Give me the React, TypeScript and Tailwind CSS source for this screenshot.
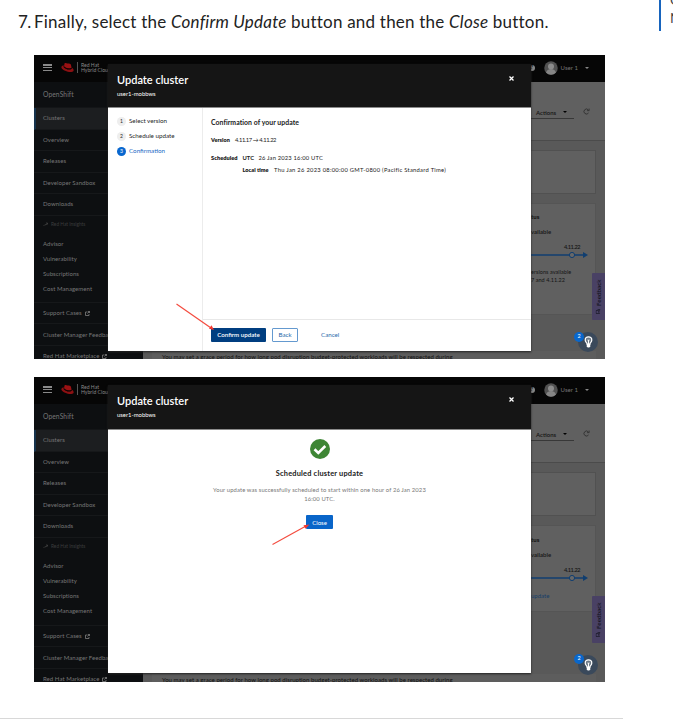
import React from "react";

const sans = "font-['Lato','Open_Sans',sans-serif]";

function Line({ className = "", children }: { className?: string; children: React.ReactNode }) {
  return <div className={`whitespace-nowrap ${className}`}>{children}</div>;
}

function Fedora() {
  return (
    <svg className="h-[11px] w-[13px] shrink-0" viewBox="0 0 26 20">
      <path d="M7 2C9 0 11 2 13 2s4-1 6 1c1 2 2 5 2 8-4 2-11 1-15-3z" fill="#9b1113" />
      <path d="M6 6C2 6 0 8 1 11c3 6 20 11 24 6 1-3-1-5-3-6l-1 2c-5 3-13 0-16-4z" fill="#8c1012" />
      <path d="M5.600 8c3 4 10 6 15 4" fill="none" stroke="#1a0000" strokeWidth="1.500" />
    </svg>
  );
}

function ExternalIcon() {
  return (
    <svg className="ml-[3px] inline-block size-[5px] align-[-0.500px]" viewBox="0 0 10 10" fill="none" stroke="#858585" strokeWidth="1.500">
      <path d="M5 2H1v7h7V6M5 5l4-4M6 1h3v3" />
    </svg>
  );
}

function NavItem({ label, active = false, external = false }: { label: string; active?: boolean; external?: boolean }) {
  return (
    <div
      className={`flex h-[21.550px] shrink-0 items-center whitespace-nowrap border-b border-[#16181a] pb-[1px] text-[6px] tracking-[0.060px] ${
        active ? "border-l-2 border-l-[#16334d] bg-[#1c1e20] pl-[7px]" : "pl-[9px]"
      }`}
    >
      <span>{label}{external && <ExternalIcon />}</span>
    </div>
  );
}

function Sidebar({ second }: { second: boolean }) {
  return (
    <div className="flex w-[109px] shrink-0 flex-col overflow-hidden bg-[#0d0f11] text-[#777]">
      <div className="flex h-[26px] shrink-0 items-center border-b border-[#131517] pl-[9px] text-[6.700px] tracking-[0.100px]">OpenShift</div>
      <NavItem label="Clusters" active />
      <NavItem label="Overview" />
      <NavItem label="Releases" />
      <NavItem label="Developer Sandbox" />
      <NavItem label="Downloads" />
      <div className="flex h-[18px] shrink-0 items-center gap-[3px] pl-[9px] text-[4.800px] text-[#3c3d3e]">
        <svg className="size-[5px]" viewBox="0 0 10 10" fill="none" stroke="#444" strokeWidth="1.500"><path d="M1 8l3-3 2 1 3-4M6 2h3v3" /></svg>
        Red Hat Insights
      </div>
      <div className={`flex shrink-0 flex-col border-b border-[#16181a] pt-[2px] text-[6px] leading-[15.100px] tracking-[0.060px] ${second ? "h-[70px]" : "h-[69px]"}`}>
        <div className="pl-[9px]">Advisor</div>
        <div className="pl-[9px]">Vulnerability</div>
        <div className="pl-[9px]">Subscriptions</div>
        <div className="pl-[9px]">Cost Management</div>
      </div>
      <NavItem label="Support Cases" external />
      <NavItem label="Cluster Manager Feedback" />
      <NavItem label="Red Hat Marketplace" external />
    </div>
  );
}

function Masthead() {
  return (
    <div className="flex h-[27px] shrink-0 items-center bg-[#060606] pb-[2px] pl-[9px] pr-[16px] text-[#777]">
      <div className="flex h-[7px] w-[9px] flex-col justify-between">
        <div className="h-[1.500px] bg-[#8a8a8a]" />
        <div className="h-[1.500px] bg-[#8a8a8a]" />
        <div className="h-[1.500px] bg-[#8a8a8a]" />
      </div>
      <div className="ml-[9px] flex"><Fedora /></div>
      <div className="ml-[3px] h-[11px] w-px bg-[#555]" />
      <div className="ml-[3px] whitespace-nowrap text-[5.100px] leading-[5px] text-[#888]">
        Red Hat<br />Hybrid Cloud Console
      </div>
      <div className="ml-auto flex items-center">
        <div className="flex size-[6px] items-center justify-center rounded-full bg-[#858585] text-[5px] font-bold leading-none text-black">?</div>
        <svg className="ml-[9px] size-[14px]" viewBox="0 0 28 28">
          <circle cx="14" cy="14" r="13.500" fill="#515151" />
          <circle cx="14" cy="11" r="6" fill="#8b8b8b" />
          <path d="M4 23c2-6 6-7 10-7s8 1 10 7c-6 6-14 6-20 0z" fill="#858585" />
        </svg>
        <span className="ml-[3px] whitespace-nowrap text-[6px] tracking-[0.050px]">User 1</span>
        <div className="ml-[7px] border-x-2 border-t-[2.500px] border-x-transparent border-t-[#888]" />
      </div>
    </div>
  );
}

function Dashboard({ second }: { second: boolean }) {
  return (
    <div className="relative flex min-w-0 grow flex-col bg-[#595959] text-[#151515]">
      <div className="flex h-[59px] shrink-0 items-start justify-end border-b border-[#4b4b4b] bg-[#606060] pr-[15px] pt-[23px]">
        <div className="flex h-[14px] w-[43px] items-center justify-between border-b border-[#383838] pl-[5px] pr-[7px] pt-[1px] text-[6px] font-semibold">
          Actions<span className="border-x-2 border-t-[2.500px] border-x-transparent border-t-black" />
        </div>
        <svg className="ml-[9px] mt-[3px] size-[7px]" viewBox="0 0 12 12" fill="none" stroke="#303030" strokeWidth="1.500">
          <path d="M9.500 8.500A4.300 4.300 0 1 1 9 3M10.500 1v3.500H7" />
        </svg>
      </div>
      <div className="mr-[9px] mt-[9px] h-[44px] shrink-0 border border-[#515151] bg-[#606060]" />
      <div className={`mr-[9px] mt-[9px] flex shrink-0 flex-col border border-[#555] bg-[#606060] pl-[387px] ${second ? "h-[87px]" : "h-[112px]"}`}>
        <Line className={`text-[6px] font-black leading-[8px] ${second ? "mt-[10px]" : "mt-[9px]"}`}>tus</Line>
        <Line className="mt-[7px] text-[6px] font-semibold leading-[8px]">vailable</Line>
        <Line className="ml-[33px] mt-[7px] text-[5.600px] font-semibold leading-[8px] tracking-[-0.400px]">4.11.22</Line>
        <svg className="h-[8px] w-[58px] shrink-0" viewBox="0 0 58 8">
          <path d="M0 4h52" stroke="#103e70" strokeWidth="1.600" />
          <path d="M52 1l5 3-5 3z" fill="#103e70" />
          <circle cx="41" cy="4" r="2.600" fill="#686868" stroke="#103e70" />
        </svg>
        {second ? (
          <Line className="mt-[10px] text-[6px] leading-[8px] text-[#163e68]">update</Line>
        ) : (
          <Line className="mt-[9px] text-[5.500px] leading-[8px] tracking-[0.050px]">ersions available<br />7 and 4.11.22</Line>
        )}
      </div>
      <div className="mt-auto flex h-[8px] items-start overflow-hidden pl-[9px]">
        <Line className="h-[8px] w-[444px] bg-[#5d5d5d] pl-[10px] pt-[2px] text-[6px] leading-[8px] tracking-[0.050px] text-[#101010]">
          You may set a grace period for how long pod disruption budget-protected workloads will be respected during
        </Line>
      </div>
      <div className={`absolute right-0 flex h-[47px] w-[13px] items-center justify-center rounded-l-[1px] bg-[#494164] ${second ? "top-[192px]" : "top-[191px]"}`}>
        <div className="flex -rotate-90 items-center gap-[3px] whitespace-nowrap text-[6.300px] font-semibold text-[#141420]">
          <svg className="size-[5px] shrink-0" viewBox="0 0 10 10" fill="none" stroke="#141420" strokeWidth="1.300"><path d="M1 1h6v5H4L1 8zM5 8h2l2 1V4" /></svg>
          Feedback
        </div>
      </div>
      <div className={`absolute right-[7px] flex size-[20px] items-center justify-center rounded-full bg-[#3a495b] ${second ? "top-[251px]" : "top-[250px]"}`}>
        <svg className="h-[12px] w-[9px]" viewBox="0 0 18 24">
          <path d="M9 1.500c-4 0-7 2.500-6.500 7 0 4 4 5 4 8h5c0-3 4-4 4-8 .5-4.500-2.500-7-6.500-7z" fill="#6d7986" stroke="#fff" strokeWidth="2.500" />
          <path d="M9 10.500l-3-3h6zM8 10h2v6H8z" fill="#fff" />
          <path d="M5.500 16h7v5l-2 2h-3l-2-2z" fill="#fff" />
        </svg>
      </div>
      <div className="absolute right-[21px] top-[250px] flex size-[10px] items-center justify-center rounded-full bg-[#0967cc] text-[5.500px] leading-none text-white">2</div>
    </div>
  );
}

function Step({ n, label, active = false }: { n: number; label: string; active?: boolean }) {
  return (
    <div className={`flex h-[15px] items-center gap-[3px] whitespace-nowrap text-[6.250px] ${active ? "text-[#1769c4]" : "text-[#252525]"}`}>
      <span className={`flex size-[9px] items-center justify-center rounded-full text-[5px] leading-none ${active ? "bg-[#0867cf] text-white" : "bg-[#eeeeee]"}`}>{n}</span>
      {label}
    </div>
  );
}

function Confirmation() {
  return (
    <div className="flex min-h-0 grow">
      <div className="w-[95px] shrink-0 border-r border-[#ececec] pl-[9px] pt-[5.500px]">
        <Step n={1} label="Select version" />
        <Step n={2} label="Schedule update" />
        <Step n={3} label="Confirmation" active />
      </div>
      <div className="flex grow flex-col">
        <div className="grow pl-[8px] text-[5.800px] leading-[8px] text-[#222]">
          <Line className="mt-[9px] text-[6.900px] font-bold leading-[10px] tracking-[0.050px]">Confirmation of your update</Line>
          <Line className="mt-[9px] flex"><span className="w-[24px] text-[5.500px] font-extrabold">Version</span><span className="tracking-[-0.400px]">4.11.17 → 4.11.22</span></Line>
          <div className="mt-[10px] flex">
            <Line className="w-[31.500px] text-[5.700px] font-extrabold">Scheduled</Line>
            <div>
              <Line className="flex"><span className="w-[16px] font-bold">UTC</span><span className="tracking-[0.180px]">26 Jan 2023 16:00 UTC</span></Line>
              <Line className="mt-[4px] flex"><span className="w-[31.500px] text-[5.600px] font-extrabold">Local time</span><span className="tracking-[0.280px]">Thu Jan 26 2023 08:00:00 GMT-0800 (Pacific Standard Time)</span></Line>
            </div>
          </div>
        </div>
        <div className="flex h-[32px] shrink-0 items-start border-t border-[#e8e8e8] pl-[8px] pt-[8px] text-[6.200px] text-[#2869aa]">
          <div className="flex h-[14px] w-[55px] items-center justify-center whitespace-nowrap rounded-[1px] bg-[#003e80] font-semibold text-white">Confirm update</div>
          <div className="ml-[6px] flex h-[14px] w-[26px] items-center justify-center rounded-[1px] border border-[#6499cf]">Back</div>
          <div className="ml-[23px] flex h-[14px] items-center">Cancel</div>
        </div>
      </div>
    </div>
  );
}

function Success() {
  return (
    <div className="flex grow flex-col items-center">
      <svg className="mt-[9px] size-[20px]" viewBox="0 0 20 20">
        <circle cx="10" cy="10" r="10" fill="#3e8635" />
        <path d="M4.500 10.300L8.300 14l7-7" fill="none" stroke="#fff" strokeWidth="2.600" />
      </svg>
      <Line className="mt-[10px] text-[7.400px] font-bold leading-[10px] tracking-[0.200px] text-[#181818]">Scheduled cluster update</Line>
      <div className="mt-[6px] whitespace-nowrap text-center text-[5.850px] leading-[9px] tracking-[0.120px] text-[#777]">
        Your update was successfully scheduled to start within one hour of 26 Jan 2023<br />16:00 UTC.
      </div>
      <div className="mt-[12px] flex h-[14px] w-[27px] items-center justify-center rounded-[1px] bg-[#0965c9] text-[6px] text-white">Close</div>
    </div>
  );
}

function Screen({ second = false }: { second?: boolean }) {
  return (
    <div className={`relative flex w-[571px] flex-col overflow-hidden ${second ? "h-[305px]" : "h-[304px]"}`}>
      <Masthead />
      <div className="flex min-h-0 grow">
        <Sidebar second={second} />
        <Dashboard second={second} />
      </div>
      <div className={`absolute left-[74px] flex w-[423px] flex-col bg-white shadow-[0_1px_2px_#222] ${second ? "top-[8px] h-[288px]" : "top-[9px] h-[287px]"}`}>
        <div className={`flex shrink-0 justify-between border-b border-[#8b8b8b] bg-[#151515] pl-[9px] pr-[17px] text-white ${second ? "h-[45px]" : "h-[44px]"}`}>
          <div>
            <Line className="mt-[9px] text-[11px] font-semibold leading-[14px]">Update cluster</Line>
            <Line className="mt-[3px] text-[5.900px] leading-[8px]">user1-mobbws</Line>
          </div>
          <svg className="mt-[12px] size-[5px]" viewBox="0 0 10 10"><path d="M1 1l8 8M9 1L1 9" stroke="#fff" strokeWidth="2.600" /></svg>
        </div>
        {second ? <Success /> : <Confirmation />}
      </div>
      {second ? (
        <svg className="absolute left-[237px] top-[146px] h-[23px] w-[40px]" viewBox="0 0 40 23">
          <path d="M1.500 21.500L35 3" stroke="#f44b3e" strokeWidth="1.100" /><path d="M38.500 1.500l-4 4.300-2-3.600z" fill="#f3372e" />
        </svg>
      ) : (
        <svg className="absolute left-[141px] top-[247px] h-[29px] w-[40px]" viewBox="0 0 40 29">
          <path d="M1.500 2L36 26" stroke="#f44b3e" strokeWidth="1.100" /><path d="M39 28l-5-1.200 2.500-3.600z" fill="#f3372e" />
        </svg>
      )}
    </div>
  );
}

export default function App() {
  return (
    <div className={`flex h-[725px] w-[673px] overflow-hidden bg-white ${sans}`}>
      <div className="flex w-[623px] shrink-0 flex-col">
        <div className="flex h-[55px] shrink-0 items-start whitespace-nowrap pt-[10px] text-[17px] leading-[24px] text-[#222]">
          <span className="w-[34px] pl-[18px] tracking-[-0.500px]">7.</span>
          <span className="tracking-[0.210px]">Finally, select the <i>Confirm Update</i> button and then the <i>Close</i> button.</span>
        </div>
        <div className="flex flex-col gap-[18px] pl-[34px]">
          <Screen />
          <Screen second />
        </div>
        <div className="mt-[36px] h-px bg-[#d8d8d8]" />
      </div>
      <div className="ml-[36px] h-[31px] w-[14px] overflow-hidden border-l-2 border-[#1764bd] pl-[9px] text-[14px] leading-[17px] text-[#444]">
        <div className="-mt-[9px]">C</div>
        <div className="mt-px">N</div>
      </div>
    </div>
  );
}
